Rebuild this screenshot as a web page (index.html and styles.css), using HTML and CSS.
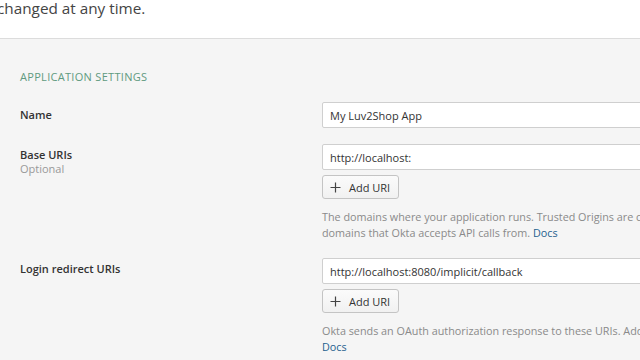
FILE: index.html
```html
<!DOCTYPE html>
<html>
    <head>
        <title>Application Settings</title>
        <link rel="stylesheet" href="styles.css">
    </head>
    <body>
        <div class="intro">
            <p>changed at any time.</p>
        </div>
        <div class="panel">
            <h3 class="section-title">APPLICATION SETTINGS</h3>

            <div class="row">
                <div class="label label-name">Name</div>
                <div class="field">
                    <input class="text-input" type="text" value="My Luv2Shop App">
                </div>
            </div>

            <div class="row">
                <div class="label">
                    Base URIs
                    <span class="hint">Optional</span>
                </div>
                <div class="field">
                    <input class="text-input" type="text" value="http://localhost:">
                    <button class="add-btn" type="button">
                        <svg width="11" height="11" viewBox="0 0 11 11"><path d="M5.5 0.5v10M0.5 5.5h10" stroke="#444" stroke-width="1.2" fill="none"/></svg>
                        Add URI
                    </button>
                    <p class="help">The domains where your application runs. Trusted Origins are created for the<br>domains that Okta accepts API calls from. <a href="#">Docs</a></p>
                </div>
            </div>

            <div class="row">
                <div class="label">Login redirect URIs</div>
                <div class="field">
                    <input class="text-input" type="text" value="http://localhost:8080/implicit/callback">
                    <button class="add-btn" type="button">
                        <svg width="11" height="11" viewBox="0 0 11 11"><path d="M5.5 0.5v10M0.5 5.5h10" stroke="#444" stroke-width="1.2" fill="none"/></svg>
                        Add URI
                    </button>
                    <p class="help">Okta sends an OAuth authorization response to these URIs. Add your redirect URIs<br><a href="#">Docs</a></p>
                </div>
            </div>
        </div>
    </body>
</html>
```

FILE: styles.css
```css
body
{
    margin: 0;
    background-color: #f5f5f5;
    font-family: "Open Sans", "Liberation Sans", sans-serif;
    overflow: hidden;
}
.intro
{
    height: 38px;
    background: #fff;
    border-bottom: 1px solid #dcdcdc;
}
.intro p
{
    margin: 0;
    margin-left: -3px;
    font-size: 15.3px;
    line-height: 16px;
    color: #444;
}
.panel
{
    padding: 0 0 40px 20px;
    overflow: hidden;
}
.section-title
{
    margin: 31px 0 0 0;
    font-size: 11px;
    line-height: 14px;
    letter-spacing: 0.3px;
    font-weight: normal;
    color: #5f9a80;
}
.row
{
    display: grid;
    grid-template-columns: 302px 460px;
    margin-top: 16px;
}
.row:nth-of-type(1)
{
    margin-top: 18px;
}
.label
{
    padding-top: 4px;
    font-size: 11px;
    line-height: 14px;
    font-weight: 600;
    color: #333;
}
.label-name
{
    padding-top: 6px;
}
.hint
{
    display: block;
    font-weight: normal;
    color: #999;
}
.field
{
    display: flex;
    flex-direction: column;
    align-items: flex-start;
}
.text-input
{
    box-sizing: border-box;
    width: 420px;
    height: 26px;
    padding: 0 7px;
    border: 1px solid #cfcfcf;
    border-radius: 2px;
    background: #fff;
    font-family: inherit;
    font-size: 11px;
    color: #333;
}
.add-btn
{
    display: flex;
    align-items: center;
    gap: 8px;
    box-sizing: border-box;
    width: 77px;
    height: 24px;
    margin-top: 5px;
    padding: 0 7px;
    border: 1px solid #c4c4c4;
    border-radius: 3px;
    background: linear-gradient(#fbfbfb, #f1f1f1);
    font-family: inherit;
    font-size: 11px;
    white-space: nowrap;
    color: #333;
}
.help
{
    margin: 10px 0 1px 0;
    font-size: 10.8px;
    line-height: 16px;
    white-space: nowrap;
    color: #8a8a8a;
}
.help a
{
    color: #1e5f8e;
    text-decoration: none;
}
```
